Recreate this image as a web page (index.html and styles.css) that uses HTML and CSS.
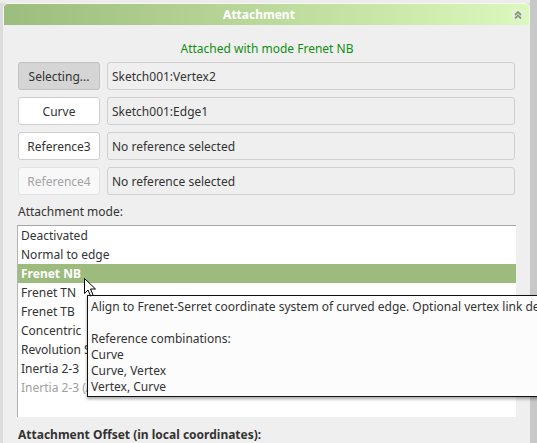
FILE: index.html
```html
<!DOCTYPE html>
<html>
<head>
<meta charset="utf-8">
<link rel="stylesheet" href="styles.css">
</head>
<body>
<div class="page">
  <div class="panel">
    <div class="header">
      <div class="title">Attachment</div>
      <div class="collapse">
        <svg width="12" height="12" viewBox="0 0 12 12"><path d="M3 6 L6 3 L9 6 M3 9.5 L6 6.5 L9 9.5" fill="none" stroke="#7fa363" stroke-width="1.8"/></svg>
      </div>
    </div>
    <div class="body">
      <div class="status">Attached with mode Frenet NB</div>
      <div class="refs">
        <div class="row"><div class="btn btn-active">Selecting...</div><div class="field">Sketch001:Vertex2</div></div>
        <div class="row"><div class="btn">Curve</div><div class="field">Sketch001:Edge1</div></div>
        <div class="row"><div class="btn">Reference3</div><div class="field">No reference selected</div></div>
        <div class="row"><div class="btn btn-disabled">Reference4</div><div class="field">No reference selected</div></div>
      </div>
      <div class="label">Attachment mode:</div>
      <div class="list">
        <div class="item">Deactivated</div>
        <div class="item">Normal to edge</div>
        <div class="item selected">Frenet NB</div>
        <div class="item">Frenet TN</div>
        <div class="item">Frenet TB</div>
        <div class="item">Concentric</div>
        <div class="item">Revolution Section</div>
        <div class="item">Inertia 2-3</div>
        <div class="item dim">Inertia 2-3 (Axis)</div>
      </div>
      <div class="label bold">Attachment Offset (in local coordinates):</div>
    </div>
  </div>
  <div class="strip"></div>
</div>
<div class="tooltip">
  <div>Align to Frenet-Serret coordinate system of curved edge. Optional vertex link defines origin.</div>
  <div>&nbsp;</div>
  <div>Reference combinations:</div>
  <div>Curve</div>
  <div>Curve, Vertex</div>
  <div>Vertex, Curve</div>
</div>
<svg class="cursor" width="13" height="20" viewBox="0 0 13 20"><path d="M0.5 0.5 L0.5 15.5 L4 12 L6.5 18 L9 17 L6.5 11 L11.5 11 Z" fill="#fff" stroke="#000" stroke-width="1" stroke-linejoin="miter"/></svg>
</body>
</html>
```
FILE: styles.css
```css
html, body {
  margin: 0;
  padding: 0;
}
body {
  width: 537px;
  height: 443px;
  overflow: hidden;
  background: #dcdcdc;
  font-family: "Noto Sans", "Open Sans", sans-serif;
  font-size: 12px;
  color: #333;
  position: relative;
}
.page {
  display: flex;
  height: 443px;
  padding-top: 3px;
  padding-left: 3px;
  box-sizing: border-box;
  background: linear-gradient(#ececec 0, #ececec 3px, transparent 3px);
}
.panel {
  width: 527px;
  display: flex;
  flex-direction: column;
}
.strip {
  width: 7px;
  background: #c8c8c8;
  margin-top: -3px;
}
.header {
  height: 23px;
  display: flex;
  align-items: center;
  border-radius: 5px 5px 0 0;
  background: linear-gradient(to right, #9bbd7d, #b5d395 40%, #dcf9bd 100%);
  box-sizing: border-box;
  border: 1px solid #f4f8ef;
  border-bottom: none;
}
.title {
  flex: 1;
  text-align: center;
  color: #fff;
  font-weight: bold;
  padding-left: 2px;
}
.collapse {
  width: 12px;
  height: 12px;
  border-radius: 50%;
  background: #e9eee4;
  margin-right: 5px;
  display: flex;
}
.body {
  flex: 1;
  background: #efefef;
  padding: 15px 14px 0 14px;
}
.status {
  text-align: center;
  color: #0f8f0f;
  line-height: 17px;
  padding-left: 1px;
}
.refs {
  margin-top: 5px;
  display: flex;
  flex-direction: column;
  gap: 7px;
}
.row {
  display: flex;
  gap: 7px;
  padding-left: 1px;
}
.btn {
  width: 82px;
  height: 28px;
  box-sizing: border-box;
  border: 1px solid #cfcfcf;
  border-radius: 3px;
  background: #fff;
  display: flex;
  align-items: center;
  justify-content: center;
  color: #333;
}
.btn-active {
  background: #d5d5d5;
  border-color: #c2c2c2;
}
.btn-disabled {
  background: #f8f8f8;
  border-color: #e2e2e2;
  color: #a4a4a4;
}
.field {
  width: 408px;
  height: 28px;
  box-sizing: border-box;
  border: 1px solid #cfcfcf;
  border-radius: 3px;
  background: #efefef;
  display: flex;
  align-items: center;
  padding-left: 4px;
  color: #333;
}
.label {
  margin-top: 8px;
  line-height: 17px;
  padding-left: 1px;
}
.label.bold {
  font-weight: bold;
  margin-top: 9px;
}
.list {
  margin-top: 5px;
  width: 499px;
  height: 192px;
  box-sizing: border-box;
  background: #fff;
  border-top: 1px solid #a6a6a6;
  border-left: 1px solid #b4b4b4;
}
.item {
  height: 19px;
  line-height: 19px;
  padding-left: 3px;
  white-space: nowrap;
}
.item.selected {
  background: #9cbb7c;
  color: #fff;
  font-weight: bold;
}
.item.dim {
  color: #a0a0a0;
}
.tooltip {
  position: absolute;
  left: 87px;
  top: 295px;
  width: 470px;
  box-sizing: border-box;
  background: #fcfcfc;
  border: 1px solid #111;
  padding: 3px 3px 1px 3px;
  line-height: 16px;
  white-space: nowrap;
  overflow: hidden;
  color: #333;
  box-shadow: 0 2px 3px rgba(0,0,0,0.35);
}
.cursor {
  position: absolute;
  left: 84px;
  top: 278px;
}
```
